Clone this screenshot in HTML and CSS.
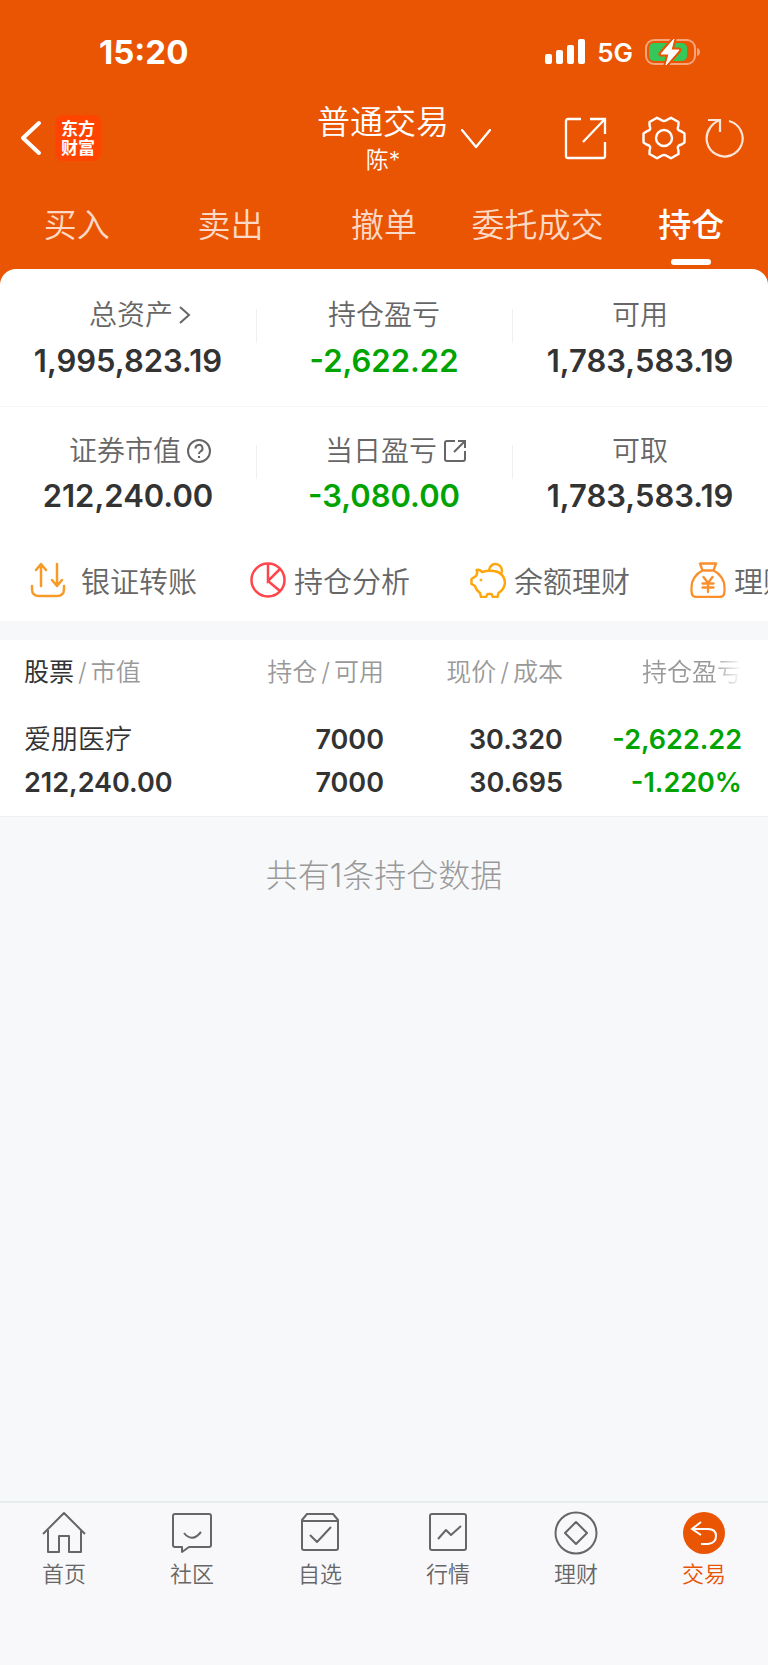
FILE: index.html
```html
<!DOCTYPE html>
<html lang="zh-CN">
<head>
<meta charset="utf-8">
<meta name="viewport" content="width=device-width, initial-scale=1">
<title>普通交易</title>
<link rel="stylesheet" href="styles.css">
</head>
<body>
<div class="page">
  <header class="header">
    <div class="status">
      <span class="status-time">15:20</span>
      <div class="status-right">
        <svg class="signal" width="40" height="26" viewBox="0 0 40 26" fill="#fff" aria-hidden="true">
          <rect x="0" y="15" width="7" height="10" rx="2"/><rect x="11" y="11" width="7" height="14" rx="2"/><rect x="22" y="6" width="7" height="19" rx="2"/><rect x="33" y="0" width="7" height="25" rx="2"/>
        </svg>
        <span class="network">5G</span>
        <svg width="56" height="28" viewBox="0 0 56 28" aria-hidden="true">
          <rect x="1" y="2" width="49" height="24" rx="8" fill="none" stroke="#f5a47c" stroke-width="2"/>
          <path d="M52 10c4 1 4 7 0 8z" fill="#f5a47c"/>
          <rect x="4" y="5" width="38" height="18" rx="5" fill="#34c759"/>
          <path d="M29 1 16 16h8l-3 11 13-15h-8z" fill="#fff" stroke="#ea5504" stroke-width="5" stroke-linejoin="round" paint-order="stroke"/>
          <path d="M29 1 16 16h8l-3 11 13-15h-8z" fill="#fff" stroke="#fff" stroke-linejoin="round"/>
        </svg>
      </div>
    </div>

    <div class="titlebar">
      <div class="title-left">
        <button class="icon-button" type="button" aria-label="返回">
          <svg width="22" height="36" viewBox="0 0 22 36" fill="none" stroke="#fff" stroke-width="4" stroke-linecap="round" stroke-linejoin="round"><path d="M19 3 3 18l16 15"/></svg>
        </button>
        <div class="logo">东方<br>财富</div>
      </div>
      <button class="account" type="button">
        <span class="account-text">
          <span class="account-title">普通交易</span>
          <span class="account-name">陈*</span>
        </span>
        <svg class="account-arrow" width="30" height="20" viewBox="0 0 30 20" fill="none" stroke="#fff" stroke-width="2.300" stroke-linecap="round" stroke-linejoin="round"><path d="m1 1 14 17L29 1"/></svg>
      </button>
      <div class="title-right">
        <button class="icon-button" type="button" aria-label="分享">
          <svg width="44" height="44" viewBox="0 0 44 44" fill="none" stroke="#fff" stroke-width="2.300"><path d="M17 3H4a2 2 0 0 0-2 2v35a2 2 0 0 0 2 2h35a2 2 0 0 0 2-2V26M26 3h15v15M40 4 19 26"/></svg>
        </button>
        <button class="icon-button" type="button" aria-label="设置">
          <svg width="44" height="44" viewBox="0 0 44 44" fill="none" stroke="#fff" stroke-width="2.400" stroke-linejoin="round"><path d="M42.500 17.500V26.500L39.500 28.500Q34 30 36.400 34L36.500 38L29 42.300L25.500 40.400Q22 37.500 18.500 40.400L15 42.300L7.500 38L7.600 34Q10 30 4.500 28.500L1.500 26.500V17.500L4.500 15.500Q10 14 7.600 10L7.500 6L15 1.700L18.500 3.600Q22 6.500 25.500 3.600L29 1.700L36.500 6L36.400 10Q34 14 39.500 15.500Z"/><circle cx="22" cy="22" r="8"/></svg>
        </button>
        <button class="icon-button" type="button" aria-label="刷新">
          <svg width="40" height="44" viewBox="0 0 40 44" fill="none" stroke="#ffe6da" stroke-width="2.200"><path d="M25 5A18 18 0 1 1 6 12Q10 6 16 4M4 4h12v12"/></svg>
        </button>
      </div>
    </div>

    <nav class="tabs">
      <a class="tab" href="#buy">买入</a>
      <a class="tab" href="#sell">卖出</a>
      <a class="tab" href="#cancel">撤单</a>
      <a class="tab" href="#orders">委托成交</a>
      <a class="tab tab-active" href="#positions">持仓</a>
    </nav>
  </header>

  <main class="main">
    <section class="summary">
      <div class="stats">
        <div class="stat">
          <div class="stat-label stat-label-icon">总资产
            <svg width="12" height="20" viewBox="0 0 12 20" fill="none" stroke="#666" stroke-width="2"><path d="m1 2 9 8-9 8"/></svg>
          </div>
          <div class="stat-value">1,995,823.19</div>
        </div>
        <div class="stat">
          <div class="stat-label">持仓盈亏</div>
          <div class="stat-value down">-2,622.22</div>
        </div>
        <div class="stat">
          <div class="stat-label">可用</div>
          <div class="stat-value">1,783,583.19</div>
        </div>
      </div>
      <div class="stats stats-second">
        <div class="stat">
          <div class="stat-label stat-label-icon">证券市值
            <svg width="24" height="24" viewBox="0 0 24 24" fill="none" stroke="#666" stroke-width="2"><circle cx="12" cy="12" r="11"/><path d="M8.500 9.500a3.500 3.500 0 1 1 5 3c-1 .6-1.500 1-1.500 2.500M12 17v2"/></svg>
          </div>
          <div class="stat-value">212,240.00</div>
        </div>
        <div class="stat">
          <div class="stat-label stat-label-icon">当日盈亏
            <svg width="24" height="24" viewBox="0 0 24 24" fill="none" stroke="#666" stroke-width="2"><path d="M12 2H4a2 2 0 0 0-2 2v16a2 2 0 0 0 2 2h16a2 2 0 0 0 2-2v-8M15 2h7v7M22 2 11 13"/></svg>
          </div>
          <div class="stat-value down">-3,080.00</div>
        </div>
        <div class="stat">
          <div class="stat-label">可取</div>
          <div class="stat-value">1,783,583.19</div>
        </div>
      </div>

      <div class="actions">
        <a class="action" href="#transfer">
          <svg width="36" height="36" viewBox="0 0 36 36" fill="none" stroke="#f79a28" stroke-width="2.500" stroke-linecap="round" stroke-linejoin="round"><path d="M2 24v3q0 7 7 7h18q7 0 7-7v-3M11 24V3M6 8l5-6 5 6M27 2v21M22 18l5 6 5-6"/></svg>
          <span class="action-text action-text-wide">银证转账</span>
        </a>
        <a class="action" href="#analysis">
          <svg width="36" height="36" viewBox="0 0 36 36" fill="none" stroke="#ff454b" stroke-width="2.500"><circle cx="18" cy="18" r="16.500"/><path d="M18 2v17l12-12M18 19l12 10"/></svg>
          <span class="action-text">持仓分析</span>
        </a>
        <a class="action" href="#balance">
          <svg width="36" height="36" viewBox="0 0 36 36" fill="none" stroke="#ffa60d" stroke-width="2.500" stroke-linejoin="round"><path d="M6.500 8Q10 7 12 10Q18 8 24 9C31 10 35 15 35 21Q34 28 28.500 31L27.500 35H23L21.500 32H17.500L16 35H11L10 31Q6 28 5 24L1.500 22V17L6 14Q8 11 6.500 8Z"/><path d="M19 8a6.500 6.500 0 1 1 12 4"/><circle cx="11" cy="18" r="1" fill="#ffa60d" stroke-width="1"/></svg>
          <span class="action-text">余额理财</span>
        </a>
        <a class="action" href="#wealth">
          <svg width="36" height="36" viewBox="0 0 36 36" fill="none" stroke="#fa8f2c" stroke-width="2.300" stroke-linecap="round" stroke-linejoin="round"><path d="M10 1.500h16l-2.500 7h-11zM12.500 8.500C5 12 1.500 19 1.500 25v4q0 6 5 6h23q5 0 5-6v-4C34.500 19 31 12 23.500 8.500M13.500 15l4.500 6 4.500-6M12.500 21.500h11M12.500 25.500h11M18 21v9"/></svg>
          <span class="action-text">理财产品</span>
        </a>
      </div>
    </section>

    <section class="positions">
      <table class="table">
        <thead>
          <tr>
            <th><b class="strong">股票</b><span class="slash">/</span>市值</th>
            <th>持仓<span class="slash">/</span>可用</th>
            <th>现价<span class="slash">/</span>成本</th>
            <th><span class="fade">持仓盈亏</span></th>
          </tr>
        </thead>
        <tbody>
          <tr class="row-top">
            <td class="stock-name">爱朋医疗</td><td>7000</td><td>30.320</td><td class="down">-2,622.22</td>
          </tr>
          <tr class="row-bottom">
            <td>212,240.00</td><td>7000</td><td>30.695</td><td class="down">-1.220%</td>
          </tr>
        </tbody>
      </table>
    </section>
    <p class="count">共有1条持仓数据</p>
  </main>

  <nav class="bottom-nav">
    <a class="nav-item" href="#home">
      <svg width="44" height="44" viewBox="0 0 44 44" fill="none" stroke="#666" stroke-width="2" stroke-linejoin="round"><path d="M1 23 22 2l21 21M6 19v22h11V25h10v16h12V19"/></svg>首页</a>
    <a class="nav-item" href="#community">
      <svg width="44" height="44" viewBox="0 0 44 44" fill="none" stroke="#666" stroke-width="2" stroke-linejoin="round"><path d="M5 3h34a2 2 0 0 1 2 2v29a2 2 0 0 1-2 2H19l-7 5v-5H5a2 2 0 0 1-2-2V5a2 2 0 0 1 2-2zM14 22q8 10 17-1"/></svg>社区</a>
    <a class="nav-item" href="#watchlist">
      <svg width="44" height="44" viewBox="0 0 44 44" fill="none" stroke="#666" stroke-width="2" stroke-linejoin="round"><path d="M9 3h26l5 6v28a2 2 0 0 1-2 2H6a2 2 0 0 1-2-2V9zM4 10h36M12 24l7 7 14-15"/></svg>自选</a>
    <a class="nav-item" href="#market">
      <svg width="44" height="44" viewBox="0 0 44 44" fill="none" stroke="#666" stroke-width="2" stroke-linejoin="round"><rect x="4" y="3" width="36" height="36" rx="2"/><path d="m12 28 8-9 5 5 10-9"/></svg>行情</a>
    <a class="nav-item" href="#finance">
      <svg width="44" height="44" viewBox="0 0 44 44" fill="none" stroke="#666" stroke-width="2" stroke-linejoin="round"><circle cx="22" cy="22" r="20.500"/><path d="m22 11 11 11-11 11-11-11z"/></svg>理财</a>
    <a class="nav-item nav-active" href="#trade">
      <svg width="44" height="44" viewBox="0 0 44 44" fill="none" stroke="#fff" stroke-width="2"><circle cx="22" cy="22" r="21" fill="#ea5504" stroke="none"/><path d="m19 11-9 7 9 6M10 18h16q8 0 8 7t-8 8h-7"/></svg>交易</a>
  </nav>
</div>
</body>
</html>
```
FILE: styles.css
```css
* {
  box-sizing: border-box;
}

body {
  margin: 0;
  background: #f7f8fa;
  color: #333;
  font-family: "Inter", "Noto Sans CJK SC", sans-serif;
}

a {
  color: inherit;
  text-decoration: none;
}

button {
  border: 0;
  padding: 0;
  background: none;
  color: inherit;
  font: inherit;
}

svg {
  display: block;
  flex: none;
}

.page {
  display: flex;
  flex-direction: column;
  min-height: 100vh;
  overflow: hidden;
}

.header {
  padding-bottom: 4px;
  background: #ea5504;
  color: #fff;
}

.status {
  display: flex;
  align-items: center;
  justify-content: space-between;
  height: 96px;
  padding: 8px 67px 0 99px;
}

.status-time {
  font-size: 33px;
  font-weight: 700;
}

.status-right {
  display: flex;
  align-items: center;
}

.network {
  margin: 0 12px;
  font-size: 26px;
  font-weight: 600;
}

.titlebar {
  display: grid;
  grid-template-columns: 1fr auto 1fr;
  align-items: center;
  height: 84px;
  padding: 0 24px 0 20px;
}

.title-left,
.title-right {
  display: flex;
  align-items: center;
}

.title-left {
  gap: 13px;
}

.title-right {
  justify-content: flex-end;
}

.title-right .icon-button + .icon-button {
  margin-left: 34px;
}

.title-right .icon-button:last-child {
  margin-left: 18px;
}

.logo {
  width: 46px;
  height: 46px;
  padding-top: 3px;
  border-radius: 8px;
  background: #ff4400;
  font-family: "Noto Sans CJK SC", sans-serif;
  font-size: 17px;
  font-weight: 700;
  line-height: 19px;
  text-align: center;
}

.account {
  display: flex;
  align-items: center;
  gap: 12px;
  padding-left: 44px;
}

.account-text {
  display: flex;
  flex-direction: column;
  align-items: center;
}

.account-title {
  font-size: 33px;
  font-weight: 350;
  line-height: 44px;
}

.account-name {
  font-size: 23px;
  font-weight: 350;
  line-height: 32px;
}

.account-arrow {
  margin-top: 2px;
}

.tabs {
  display: grid;
  grid-template-columns: repeat(5, 1fr);
  height: 85px;
}

.tab {
  display: flex;
  align-items: center;
  justify-content: center;
  position: relative;
  color: #fcd9c6;
  font-size: 33px;
  font-weight: 350;
  white-space: nowrap;
}

.tab-active {
  color: #fff;
  font-weight: 500;
}

.tab-active::after {
  content: "";
  position: absolute;
  bottom: 0;
  width: 40px;
  height: 6px;
  border-radius: 3px;
  background: #fff;
}

.main {
  flex: 1;
  background: linear-gradient(#ea5504 20px, #f7f8fa 20px);
}

.summary {
  border-radius: 16px 16px 0 0;
  background: #fff;
}

.stats {
  display: grid;
  grid-template-columns: repeat(3, 1fr);
  height: 138px;
  padding-top: 26px;
  border-bottom: 1px solid #f5f5f5;
}

.stats-second {
  height: 132px;
  padding-top: 24px;
  border: 0;
}

.stat {
  position: relative;
}

.stat + .stat::before {
  content: "";
  position: absolute;
  top: 14px;
  left: 0;
  width: 1px;
  height: 34px;
  background: #f0f0f0;
}

.stat-label {
  display: flex;
  align-items: center;
  justify-content: center;
  gap: 6px;
  color: #666;
  font-size: 28px;
  font-weight: 350;
  line-height: 40px;
}

.stat-label-icon {
  padding-left: 24px;
}

.stat-value {
  margin-top: 6px;
  font-size: 31px;
  font-weight: 600;
  line-height: 40px;
  text-align: center;
}

.stats-second .stat-value {
  margin-top: 5px;
}

.down {
  color: #00a400;
}

.actions {
  display: flex;
  height: 82px;
  padding-left: 30px;
  overflow: hidden;
}

.action {
  display: flex;
  flex: none;
  align-items: center;
  gap: 8px;
  width: 220px;
  height: 82px;
  color: #666;
  font-size: 29px;
  font-weight: 350;
  white-space: nowrap;
}

.action-text-wide {
  padding-left: 7px;
}

.positions {
  margin-top: 19px;
  border-bottom: 1px solid #f0f0f0;
  background: #fff;
}

.table {
  width: 100%;
  border-collapse: collapse;
  table-layout: fixed;
}

.table th,
.table td {
  padding: 0;
  text-align: right;
  white-space: nowrap;
}

.table th {
  width: 23.3%;
  height: 60px;
  color: #999;
  font-size: 25px;
  font-weight: 350;
}

.table th:first-child,
.table td:first-child {
  padding-left: 24px;
  text-align: left;
}

.table th:first-child {
  width: 26.7%;
}

.table th:last-child {
  width: 26.7%;
}

.table th:last-child,
.table td:last-child {
  padding-right: 26px;
}

.strong {
  color: #333;
  font-weight: 400;
}

.slash {
  padding: 0 4px;
}

.fade {
  -webkit-mask-image: linear-gradient(to right, #000 70%, transparent);
  mask-image: linear-gradient(to right, #000 70%, transparent);
}

.table td {
  font-size: 27px;
  font-weight: 600;
  line-height: 42px;
}

.table .row-top td {
  padding-top: 19px;
}

.table .row-bottom td {
  padding: 1px 0 12px;
}

.table .row-bottom td:first-child {
  padding-left: 24px;
}

.table .row-bottom td:last-child {
  padding-right: 26px;
}

.table .stock-name {
  font-weight: 350;
}

.count {
  margin: 37px 0 0;
  color: #999;
  font-size: 32px;
  font-weight: 300;
  line-height: 44px;
  text-align: center;
}

.bottom-nav {
  display: grid;
  grid-template-columns: repeat(6, 1fr);
  height: 164px;
  padding-top: 8px;
  border-top: 2px solid #e7ecee;
  background: #f8f8fb;
}

.nav-item {
  display: flex;
  flex-direction: column;
  align-items: center;
  gap: 3px;
  color: #666;
  font-size: 22px;
  font-weight: 350;
  line-height: 32px;
}

.nav-active {
  color: #ea5504;
}
```
